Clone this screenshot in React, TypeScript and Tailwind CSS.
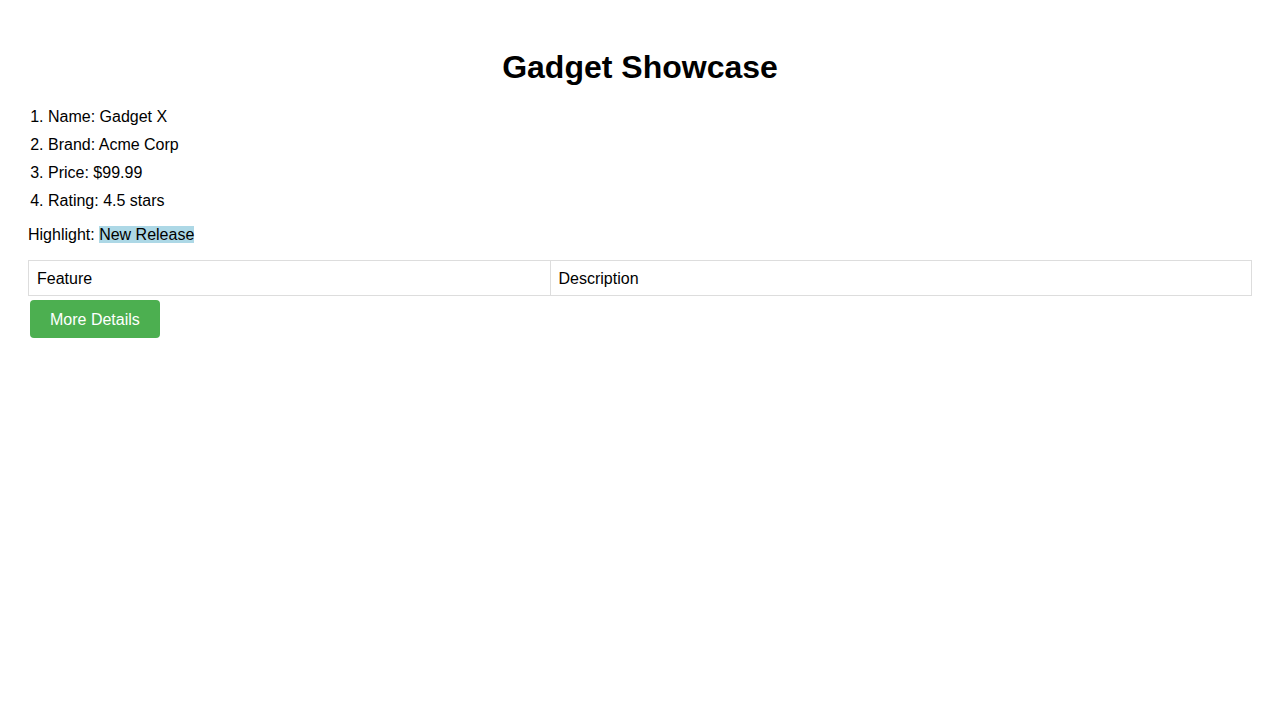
const items = [
  "Name: Gadget X",
  "Brand: Acme Corp",
  "Price: $99.99",
  "Rating: 4.5 stars",
];

const App = () => {
  return (
    <div className="min-h-screen bg-white px-[28px] pt-[49px] text-[16px] text-black font-['Liberation_Sans',Arial,sans-serif]">
      <h1 className="text-center text-[32px] font-bold leading-[37px]">Gadget Showcase</h1>

      <ol className="mt-[17px] list-decimal pl-[20px]">
        {items.map((item) => (
          <li key={item} className="py-[5px] leading-[18px]">
            {item}
          </li>
        ))}
      </ol>

      <p className="mt-[11px] leading-[18px]">
        Highlight: <span className="bg-[#add8e6]">New Release</span>
      </p>

      <table className="mt-[16px] w-full border-collapse">
        <thead>
          <tr>
            <th className="border border-[#ddd] px-[8px] pt-[9px] pb-[7px] text-left font-normal leading-[18px]">Feature</th>
            <th className="border border-[#ddd] px-[8px] pt-[9px] pb-[7px] text-left font-normal leading-[18px]">Description</th>
          </tr>
        </thead>
      </table>

      <button className="ml-[2px] mt-[4px] rounded-[4px] bg-[#4caf50] px-[20px] pt-[11px] pb-[9px] leading-[18px] text-white">
        More Details
      </button>
    </div>
  );
};

export default App;
